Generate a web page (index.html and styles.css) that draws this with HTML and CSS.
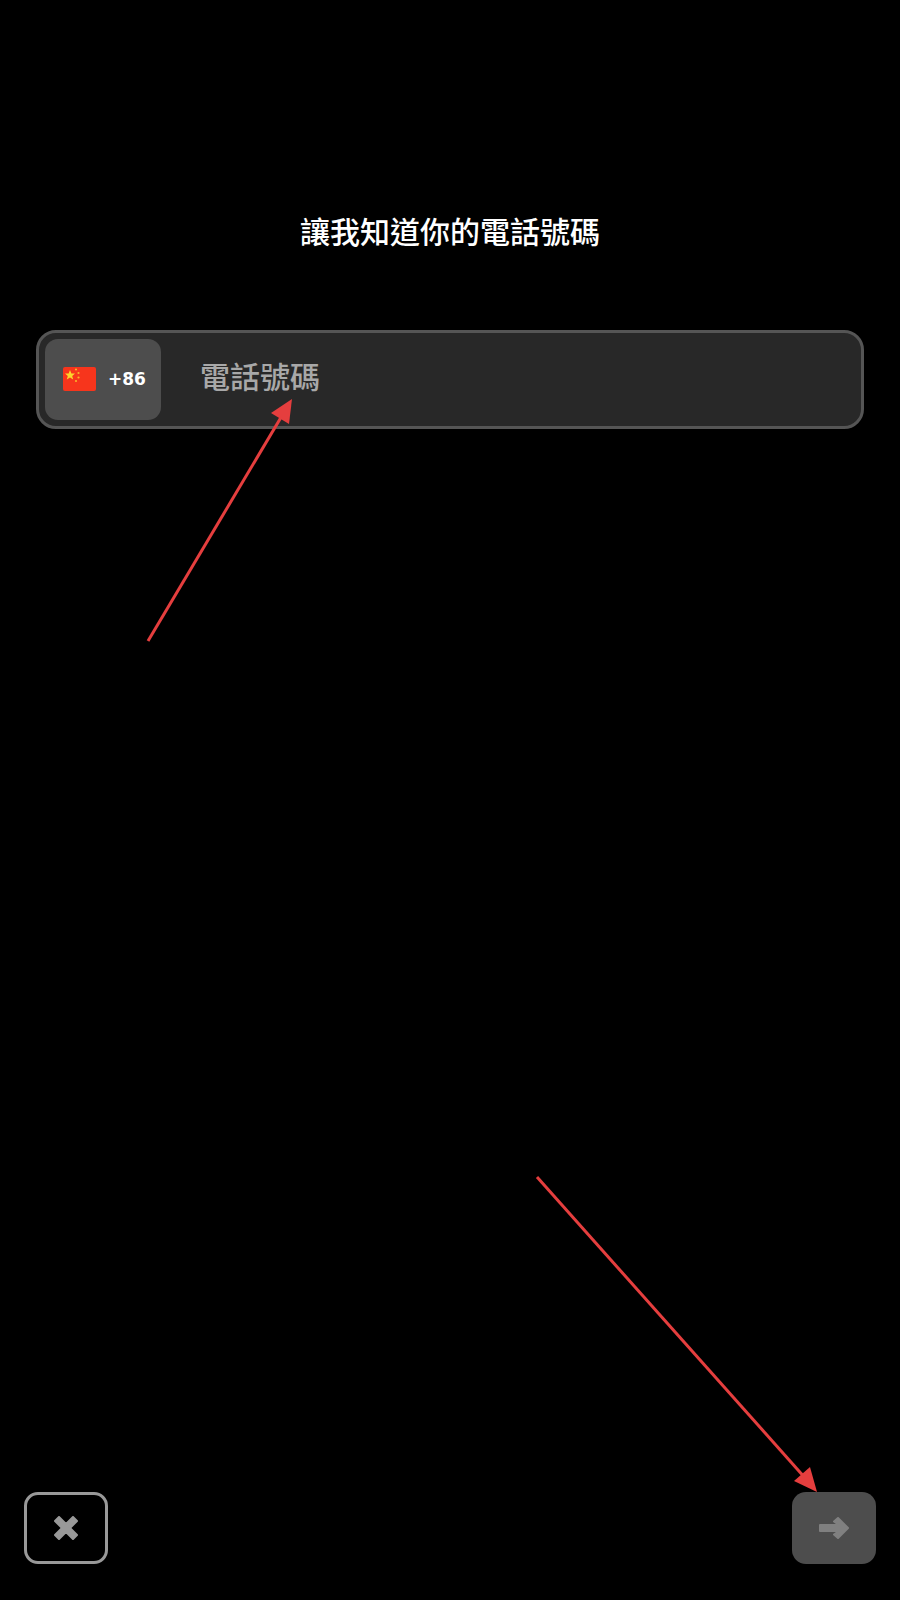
FILE: index.html
```html
<!doctype html>
<html lang="zh-Hant">

<head>
  <title>電話號碼</title>
  <link rel="stylesheet" href="styles.css">
</head>

<body>
  <div class="screen">
    <h1 class="title">讓我知道你的電話號碼</h1>

    <div class="phoneField">
      <div class="countryChip">
        <svg class="flag" viewBox="0 0 33 24">
          <rect width="33" height="24" rx="2" fill="#f7351c" />
          <polygon points="7,3 8.4,6.4 12,6.6 9.2,8.9 10.2,12.4 7,10.4 3.8,12.4 4.8,8.9 2,6.6 5.6,6.4" fill="#fbd52d" />
          <circle cx="13" cy="2.5" r="1.1" fill="#f9b22a" />
          <circle cx="15.5" cy="6" r="1.1" fill="#f9b22a" />
          <circle cx="15.5" cy="10.5" r="1.1" fill="#f9b22a" />
          <circle cx="13" cy="14" r="1.1" fill="#f9b22a" />
        </svg>
        <span class="dialCode">+86</span>
      </div>
      <span class="placeholder">電話號碼</span>
    </div>

    <div class="bottomBar">
      <button class="navBtn closeBtn" type="button">
        <svg class="navIcon" viewBox="0 0 24 24">
          <polygon points="5,1 12,8 19,1 23,5 16,12 23,19 19,23 12,16 5,23 1,19 8,12 1,5" fill="#999" stroke="#999" stroke-width="2" stroke-linejoin="round" />
        </svg>
      </button>
      <button class="navBtn nextBtn" type="button">
        <svg class="navIcon nextIcon" viewBox="0 0 30 22">
          <polygon points="1,8 20,8 15,4.5 19,1 29,11 19,21 15,17.5 20,14 1,14" fill="#808080" stroke="#808080" stroke-width="2" stroke-linejoin="round" />
        </svg>
      </button>
    </div>

    <!-- red annotation arrows over the page -->
    <svg class="annotations" viewBox="0 0 900 1600">
      <line x1="148" y1="641" x2="283" y2="414" stroke="#e53e3e" stroke-width="3" />
      <polygon points="292,399 289,424 271,413" fill="#e53e3e" />
      <line x1="537" y1="1177" x2="806" y2="1479" stroke="#e53e3e" stroke-width="3" />
      <polygon points="817,1492 794,1481 810,1467" fill="#e53e3e" />
    </svg>
  </div>
</body>

</html>
```

FILE: styles.css
```css
body {
  margin: 0;
  background-color: #000;
  font-family: "Noto Sans CJK TC", "Liberation Sans", sans-serif;
}

.screen {
  position: relative;
  height: 1600px;
  display: flex;
  flex-direction: column;
  box-sizing: border-box;
  padding: 0 24px 36px;
}

.title {
  margin: 205px 0 0;
  height: 50px;
  line-height: 50px;
  text-align: center;
  font-size: 30px;
  font-weight: 500;
  color: #fff;
}

.phoneField {
  display: flex;
  align-items: center;
  box-sizing: border-box;
  height: 99px;
  margin: 75px 12px 0 12px;
  padding: 6px;
  background-color: #282828;
  border: 3px solid #555;
  border-radius: 20px;
}

.countryChip {
  display: flex;
  align-items: center;
  box-sizing: border-box;
  width: 116px;
  height: 81px;
  padding-left: 18px;
  background-color: #4d4d4d;
  border-radius: 13px;
}

.flag {
  width: 33px;
  height: 24px;
  margin-top: -2px;
}

.dialCode {
  margin-left: 12px;
  margin-bottom: 2px;
  font-family: "DejaVu Sans", sans-serif;
  font-size: 17px;
  font-weight: 700;
  color: #fff;
}

.placeholder {
  margin-left: 39px;
  margin-bottom: 9px;
  font-size: 30px;
  font-weight: 500;
  color: #a8a8a8;
}

.bottomBar {
  display: flex;
  justify-content: space-between;
  margin-top: auto;
}

.navBtn {
  display: flex;
  align-items: center;
  justify-content: center;
  box-sizing: border-box;
  width: 84px;
  height: 72px;
  padding: 0;
  border-radius: 14px;
}

.closeBtn {
  background: none;
  border: 3px solid #999;
}

.nextBtn {
  background-color: #4d4d4d;
  border: none;
}

.navIcon {
  width: 24px;
  height: 24px;
}

.nextIcon {
  width: 30px;
  height: 22px;
}

.annotations {
  position: absolute;
  top: 0;
  left: 0;
  width: 900px;
  height: 1600px;
  pointer-events: none;
}
```
